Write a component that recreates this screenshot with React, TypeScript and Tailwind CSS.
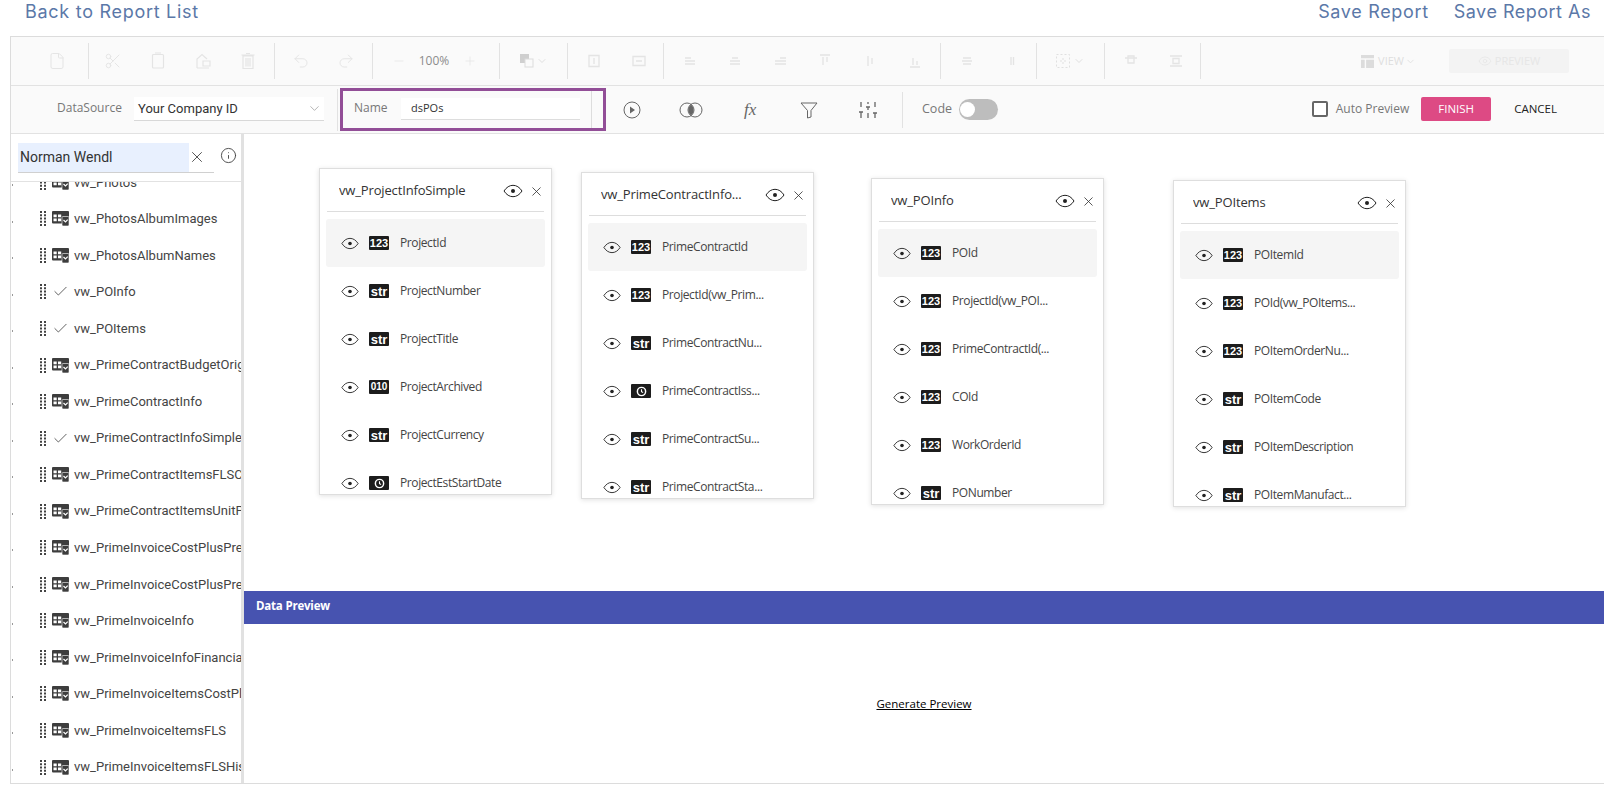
import React from "react";
import { File, Scissors, Minus, Plus, Undo2, Redo2, ChevronDown, X, Info, Check, Eye } from "lucide-react";

type Kind = "123" | "str" | "010" | "clock";

function EyeIcon({ className = "" }: { className?: string }) {
  return (
    <svg viewBox="0 0 20 14" className={className} fill="none">
      <path d="M1 7C3.5 3.2 6.5 1.3 10 1.3S16.5 3.2 19 7c-2.5 3.8-5.500 5.700-9 5.700S3.500 10.800 1 7Z" stroke="#222" strokeWidth="1" />
      <circle cx="10" cy="7" r="2" fill="#222" />
    </svg>
  );
}

function Badge({ kind }: { kind: Kind }) {
  return (
    <span className="flex h-[14px] w-[20px] shrink-0 items-center justify-center rounded-[1px] bg-[#1c1c1c] font-['Liberation_Sans',sans-serif] font-bold leading-none text-white">
      {kind === "123" && <span className="text-[11px]">123</span>}
      {kind === "str" && <span className="text-[13px]">str</span>}
      {kind === "010" && <span className="text-[10px]">010</span>}
      {kind === "clock" && (
        <svg viewBox="0 0 12 12" className="h-[11px] w-[11px]" fill="none" stroke="#fff">
          <circle cx="6" cy="6" r="4.500" strokeWidth="1.600" />
          <path d="M6 3.500V6.200L7.800 7" strokeWidth="1.200" />
        </svg>
      )}
    </span>
  );
}

function Card({ title, fields, className }: { title: string; fields: [Kind, string][]; className: string }) {
  return (
    <div className={`absolute flex h-[327px] w-[233px] flex-col overflow-hidden border border-[#dedede] bg-white shadow-[0_1px_5px_rgba(0,0,0,0.12)] ${className}`}>
      <div className="mx-[7px] flex h-[43px] shrink-0 items-center border-b border-[#dddddd] pl-[12px] pt-[2px]">
        <span className="flex-1 truncate text-[13px] font-medium tracking-[-0.15px] text-[#333]">{title}</span>
        <EyeIcon className="mr-[6px] h-[14px] w-[20px]" />
        <X className="h-[15px] w-[15px] text-[#333]" strokeWidth={1.300} />
      </div>
      <div className="mt-[7px] flex flex-col px-[6px]">
        {fields.map(([k, n], i) => (
          <div key={n} className={`flex h-[48px] shrink-0 items-center rounded-[3px] pl-[15px] ${i === 0 ? "bg-[#f5f5f5]" : ""}`}>
            <EyeIcon className="mr-[10px] h-[13px] w-[18px] shrink-0" />
            <Badge kind={k} />
            <span className="ml-[11px] text-[12px] tracking-[-0.4px] text-[#444]">{n}</span>
          </div>
        ))}
      </div>
    </div>
  );
}

function TableIcon() {
  return (
    <svg viewBox="0 0 17 15" className="h-[15px] w-[17px]">
      <rect x="0" y="0" width="17" height="12.500" rx="1" fill="#3d3d3d" />
      <path d="M1.500 3.500h3.200v2.700H1.500zM6 3.500h3.200v2.700H6zM1.500 7.500h3.200v2.700H1.500zM6 7.500h3.200v2.700H6z" fill="#fff" />
      <rect x="10" y="5.500" width="7" height="9.500" rx="1" fill="#3d3d3d" stroke="#fff" strokeWidth="0.600" />
      <path d="M11.500 9l2 2 2.200-2.400" fill="none" stroke="#fff" strokeWidth="1.200" />
    </svg>
  );
}

function Grip() {
  return (
    <svg viewBox="0 0 6 15" className="h-[15px] w-[6px] shrink-0" fill="#444">
      {[0, 3.25, 6.5, 9.75, 13].map((y) => (
        <g key={y}>
          <rect x="0" y={y} width="2" height="2" />
          <rect x="4" y={y} width="2" height="2" />
        </g>
      ))}
    </svg>
  );
}

const tree: [string, boolean][] = [
  ["vw_Photos", false],
  ["vw_PhotosAlbumImages", false],
  ["vw_PhotosAlbumNames", false],
  ["vw_POInfo", true],
  ["vw_POItems", true],
  ["vw_PrimeContractBudgetOriginal", false],
  ["vw_PrimeContractInfo", false],
  ["vw_PrimeContractInfoSimple", true],
  ["vw_PrimeContractItemsFLSCurrent", false],
  ["vw_PrimeContractItemsUnitPrice", false],
  ["vw_PrimeInvoiceCostPlusPrevious", false],
  ["vw_PrimeInvoiceCostPlusPreview", false],
  ["vw_PrimeInvoiceInfo", false],
  ["vw_PrimeInvoiceInfoFinancials", false],
  ["vw_PrimeInvoiceItemsCostPlus", false],
  ["vw_PrimeInvoiceItemsFLS", false],
  ["vw_PrimeInvoiceItemsFLSHistory", false],
];

function Faint({ d }: { d: string }) {
  return (
    <svg viewBox="0 0 16 16" className="h-[16px] w-[16px] shrink-0" fill="none" stroke="#e4e4e4" strokeWidth="1.300">
      <path d={d} />
    </svg>
  );
}

function FaintTall({ d }: { d: string }) {
  return (
    <svg viewBox="0 0 18 18" className="h-[18px] w-[18px] shrink-0" fill="none" stroke="#e4e4e4" strokeWidth="1.200">
      <path d={d} />
    </svg>
  );
}

const ic = "h-[18px] w-[18px] shrink-0 text-[#e4e4e4]";
const sep = "flex h-[36px] shrink-0 items-center border-r border-[#e2e2e2]";

export default function App() {
  return (
    <div className="flex h-[788px] w-[1604px] flex-col overflow-hidden bg-white font-['Open_Sans',sans-serif]">
      <div className="flex h-[36px] shrink-0 items-start pl-[25px] pr-[13px] font-['Inter',sans-serif] text-[18px] leading-[24px] text-[#5b78a8]">
        <a className="flex-1 tracking-[0.72px]">Back to Report List</a>
        <a className="tracking-[0.66px]">Save Report</a>
        <a className="ml-[25px] tracking-[0.5px]">Save Report As</a>
      </div>

      <div className="mb-[4px] ml-[10px] flex min-h-0 flex-1 flex-col border-y border-l border-[#dcdcdc]">
        {/* toolbar */}
        <div className="flex h-[49px] shrink-0 items-center border-b border-[#e2e2e2] bg-[#fafafa]">
          <div className={`${sep} w-[78px] pl-[37px]`}><File className={ic} strokeWidth={1.300} /></div>
          <div className={`${sep} w-[186px] gap-[27px] pl-[15px]`}>
            <Scissors className={ic} strokeWidth={1.300} />
            <FaintTall d="M4.500 2.500h9a1 1 0 0 1 1 1V15a1 1 0 0 1-1 1h-9a1 1 0 0 1-1-1V3.500a1 1 0 0 1 1-1zM6 1h6" />
            <FaintTall d="M3 16V7l5-4.500L13 7M3 16h12M9 9h7v5H9z" />
            <FaintTall d="M4 4h10v12.500H4zM2.500 3h13M7 1.500h4M7 6v8.500M9 6v8.500M11 6v8.500" />
          </div>
          <div className={`${sep} w-[98px] gap-[27px] pl-[17px]`}>
            <Undo2 className={ic} strokeWidth={1.300} />
            <Redo2 className={ic} strokeWidth={1.300} />
          </div>
          <div className={`${sep} w-[127px] pl-[19px] text-[12px] text-[#8c8c8c]`}>
            <Minus className="h-[14px] w-[14px] text-[#e4e4e4]" strokeWidth={1.300} />
            <span className="ml-[10px] w-[36px] text-center">100%</span>
            <Plus className="ml-[11px] h-[14px] w-[14px] text-[#e4e4e4]" strokeWidth={1.300} />
          </div>
          <div className={`${sep} w-[68px] pl-[19px]`}>
            <svg viewBox="0 0 16 16" className="h-[16px] w-[16px]">
              <rect x="1" y="1" width="9" height="9" fill="#cfcfcf" />
              <rect x="6" y="6" width="8" height="8" fill="#fafafa" stroke="#dcdcdc" />
            </svg>
            <ChevronDown className="ml-[1px] h-[12px] w-[12px] text-[#e0e0e0]" />
          </div>
          <div className={`${sep} w-[96px] gap-[29px] pl-[18px]`}>
            <Faint d="M3 2.500h10v11H3zM8 5v6" />
            <Faint d="M2 3.500h12v9H2zM5 8h6" />
          </div>
          <div className={`${sep} w-[277px] gap-[29px] pl-[18px]`}>
            <Faint d="M3 5h6M3 8h10M3 11h10" />
            <Faint d="M5 5h6M3 8h10M3 11h10" />
            <Faint d="M8 5h6M3 8h11M3 11h11" />
            <Faint d="M3 2h10M6 4v8M10 4v5" />
            <Faint d="M6 3v10M10 5v6" />
            <Faint d="M3 14h10M6 5v7M10 8v4" />
          </div>
          <div className={`${sep} w-[96px] gap-[29px] pl-[18px]`}>
            <Faint d="M4 5h8M3 8h10M4 11h8" />
            <Faint d="M7 4v8M9.500 4v8" />
          </div>
          <div className={`${sep} w-[68px] pl-[18px]`}>
            <svg viewBox="0 0 16 16" className="h-[16px] w-[16px]" fill="none" stroke="#e0e0e0" strokeDasharray="2 2">
              <rect x="1.500" y="1.500" width="13" height="13" />
              <path d="M8 5v6M5 8h6" />
            </svg>
            <ChevronDown className="ml-[2px] h-[12px] w-[12px] text-[#e0e0e0]" />
          </div>
          <div className={`${sep} w-[96px] gap-[29px] pl-[18px]`}>
            <Faint d="M2 5h12M5 3h6v7H5z" />
            <Faint d="M2 3h12M2 13h12M5 5.500h6v5H5z" />
          </div>
          <div className="flex flex-1 items-center justify-end pr-[35px]">
            <svg viewBox="0 0 14 14" className="h-[13px] w-[13px]">
              <path d="M0 0h14v3.500H0zM0 5h4v9H0zM5.500 5H14v9H5.500z" fill="#dcdcdc" />
            </svg>
            <span className="ml-[4px] text-[11px] text-[#dedede]">VIEW</span>
            <ChevronDown className="ml-[1px] h-[11px] w-[11px] text-[#e0e0e0]" />
            <div className="ml-[33px] flex h-[24px] w-[120px] items-center justify-center rounded-[2px] bg-[#f3f3f3] text-[11px] text-[#e6e6e6]">
              <Eye className="mr-[3px] h-[14px] w-[14px]" strokeWidth={1.300} />
              PREVIEW
            </div>
          </div>
        </div>

        {/* second row */}
        <div className="flex h-[48px] shrink-0 items-center border-b border-[#e2e2e2] bg-[#fafafa] text-[12px] text-[#777]">
          <span className="-mt-[3px] ml-[46px] w-[77px] shrink-0">DataSource</span>
          <div className="-mt-[1px] flex h-[24px] w-[190px] shrink-0 items-center justify-between border-b border-[#d8d8d8] bg-white pl-[4px] pr-[2px] font-['Roboto',sans-serif] text-[13px] text-[#333]">
            Your Company ID
            <ChevronDown className="h-[15px] w-[15px] text-[#888]" strokeWidth={1} />
          </div>
          <div className="ml-[13px] h-[42px] w-px shrink-0 bg-[#e2e2e2]" />
          <div className="-mt-[1px] ml-[2px] flex h-[43px] w-[266px] shrink-0 items-center border-[3px] border-[#924e97] pl-[11px]">
            <span className="-mt-[2px] w-[47px] shrink-0">Name</span>
            <div className="flex h-[22px] w-[179px] shrink-0 items-center border-b border-[#dddddd] bg-white pl-[10px] text-[11px] text-[#333]">dsPOs</div>
            <div className="ml-[11px] h-full w-px shrink-0 bg-[#dddddd]" />
          </div>
          <div className="ml-[17px] flex items-center">
            <svg viewBox="0 0 18 18" className="h-[18px] w-[18px]" fill="none" stroke="#666">
              <circle cx="9" cy="9" r="8" />
              <path d="M7 5.500l5 3.500-5 3.500z" fill="#666" stroke="none" />
            </svg>
            <svg viewBox="0 0 24 16" className="ml-[38px] h-[16px] w-[24px]" fill="none" stroke="#666">
              <path d="M12 2.500a7 7 0 0 1 0 11a7 7 0 0 1 0-11z" fill="#666" stroke="none" />
              <circle cx="8" cy="8" r="7" />
              <circle cx="16" cy="8" r="7" />
            </svg>
            <span className="ml-[41px] w-[20px] font-['Liberation_Serif',serif] text-[17px] italic leading-none text-[#666]">fx</span>
            <svg viewBox="0 0 18 18" className="ml-[36px] h-[18px] w-[18px]" fill="none" stroke="#666">
              <path d="M1 2h16l-6 7.500v6.500l-3.500 1V9.500z" />
            </svg>
            <svg viewBox="0 0 20 18" className="ml-[40px] h-[18px] w-[20px]" fill="none" stroke="#666" strokeWidth="1.300">
              <path d="M3 1v5M1 11h4M3 11v6M10 1v2M8 6h4M10 6v3M10 12v5M17 1v5M15 12h4M17 12v5" />
            </svg>
            <div className="ml-[24px] h-[36px] w-px bg-[#e2e2e2]" />
            <span className="ml-[19px] w-[37px] text-[12.500px] text-[#777]">Code</span>
            <div className="flex h-[21px] w-[39px] items-center rounded-full bg-[#bdbdbd] pl-[1px]">
              <div className="h-[15px] w-[15px] rounded-full bg-white" />
            </div>
          </div>
          <div className="-mt-[2px] flex flex-1 items-center justify-end pr-[47px]">
            <div className="-ml-[1px] h-[16px] w-[16px] rounded-[2px] border-[2px] border-[#666] bg-white" />
            <span className="ml-[8px] text-[12px] text-[#777]">Auto Preview</span>
            <button className="ml-[12px] h-[24px] w-[70px] rounded-[2px] bg-[#dd4a84] text-[11.500px] text-white">FINISH</button>
            <span className="ml-[23px] text-[11.500px] text-[#222]">CANCEL</span>
          </div>
        </div>

        {/* body */}
        <div className="flex min-h-0 flex-1">
          <aside className="flex w-[233px] shrink-0 flex-col border-r-[3px] border-[#e1e1e1] font-['Roboto',sans-serif]">
            <div className="flex h-[48px] shrink-0 items-start border-b border-[#e2e2e2] pl-[7px] pt-[9px]">
              <div className="flex h-[30px] w-[196px] items-center border-b border-[#d0d0d0]">
                <div className="flex h-[29px] w-[171px] items-center bg-[#e8f0fe] pl-[2px] text-[14px] text-[#333]">Norman Wendl</div>
                <X className="-mt-[2px] ml-[-1px] h-[18px] w-[18px] text-[#444]" strokeWidth={1.200} />
              </div>
              <Info className="ml-[6px] mt-[4px] h-[17px] w-[17px] text-[#444]" strokeWidth={1.300} />
            </div>
            <div className="min-h-0 flex-1 overflow-hidden">
              <div className="-mt-[18px]">
                {tree.map(([n, c]) => (
                  <div key={n} className="relative flex h-[36.55px] items-center pl-[29px] text-[13px] text-[#444]">
                    <span className="absolute left-[1px] top-[20px] h-[2px] w-px bg-[#999]" />
                    <Grip />
                    <span className="ml-[6px] flex w-[17px] shrink-0 justify-center">
                      {c ? <Check className="h-[17px] w-[17px] text-[#555]" strokeWidth={1.300} /> : <TableIcon />}
                    </span>
                    <span className="ml-[5px] whitespace-nowrap">{n}</span>
                  </div>
                ))}
              </div>
            </div>
          </aside>

          <main className="flex min-w-0 flex-1 flex-col">
            <div className="relative h-[457px] shrink-0">
              <Card className="left-[75px] top-[34px]" title="vw_ProjectInfoSimple" fields={[["123","ProjectId"],["str","ProjectNumber"],["str","ProjectTitle"],["010","ProjectArchived"],["str","ProjectCurrency"],["clock","ProjectEstStartDate"]]} />
              <Card className="left-[337px] top-[38px]" title="vw_PrimeContractInfo..." fields={[["123","PrimeContractId"],["123","ProjectId(vw_Prim..."],["str","PrimeContractNu..."],["clock","PrimeContractIss..."],["str","PrimeContractSu..."],["str","PrimeContractSta..."]]} />
              <Card className="left-[627px] top-[44px]" title="vw_POInfo" fields={[["123","POId"],["123","ProjectId(vw_POI..."],["123","PrimeContractId(..."],["123","COId"],["123","WorkOrderId"],["str","PONumber"]]} />
              <Card className="left-[929px] top-[46px]" title="vw_POItems" fields={[["123","POItemId"],["123","POId(vw_POItems..."],["123","POItemOrderNu..."],["str","POItemCode"],["str","POItemDescription"],["str","POItemManufact..."]]} />
            </div>
            <div className="flex h-[33px] shrink-0 items-center bg-[#4753b0] pb-[3px] pl-[12px] text-[11.500px] font-bold tracking-[-0.2px] text-white">Data Preview</div>
            <div className="flex flex-1 items-center justify-center">
              <a className="text-[11.500px] font-medium text-black underline">Generate Preview</a>
            </div>
          </main>
        </div>
      </div>
    </div>
  );
}
